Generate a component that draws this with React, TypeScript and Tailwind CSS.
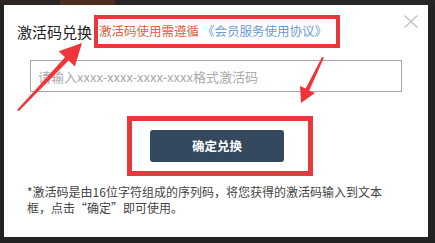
const CJK = { fontFamily: '"Noto Sans CJK SC", "Noto Sans", sans-serif' };

function Arrows() {
  return (
    <svg className="pointer-events-none absolute left-0 top-0" width="435" height="243" viewBox="0 0 435 243">
      <polygon
        fill="#f0353a"
        points="82,43 74.8,66.5 68.6,60.6 19,111 17,110 65,57.2 58.8,51.3"
      />
      <polygon
        fill="#f0353a"
        points="301,103 300,85.9 305.7,88.6 322,57 324,57.5 309.3,90.4 315,93.1"
      />
    </svg>
  );
}

export default function App() {
  return (
    <div className="relative flex h-[243px] w-[435px] flex-col overflow-hidden bg-[#242322]" style={CJK}>
      {/* backdrop strip above the dialog */}
      <div className="flex h-[5px]">
        <div className="w-[60px] bg-[#2b2523]" />
        <div className="w-[55px] bg-[#4e2c1f]" />
        <div className="flex-1 bg-[#262626]" />
      </div>

      <div className="ml-[4px] flex">
        <div className="relative h-[232px] w-[424px] bg-white">
          <div className="flex items-center pl-[13px] pt-[10px]">
            <span className="text-[15px] leading-none text-[#222]">激活码兑换</span>
            <div className="ml-[2px] flex h-[33px] w-[246px] items-center border-[4px] border-[#e8383d] pl-[1px] text-[12.5px] leading-none">
              <span className="text-[#e0603f]">激活码使用需遵循</span>
              <span className="ml-[3px] text-[#6b9bd6]">《会员服务使用协议》</span>
            </div>
          </div>

          <button className="absolute right-[10px] top-[10px] text-[#bbb]" aria-label="close">
            <svg width="14" height="13" viewBox="0 0 14 13">
              <path d="M0.5 0.5 L13.5 12.5 M13.5 0.5 L0.5 12.5" stroke="currentColor" strokeWidth="1.1" />
            </svg>
          </button>

          <input
            className="ml-[26px] mt-[12px] block h-[32px] w-[372px] border border-[#aaa] pl-[7px] text-[13px] text-[#333] outline-none placeholder:text-[#aaa]"
            placeholder="请输入xxxx-xxxx-xxxx-xxxx格式激活码"
          />

          <div className="ml-[123px] mt-[24px] h-[60px] w-[186px] border-[5px] border-[#e8383d] pl-[18px] pt-[9px]">
            <button className="flex h-[32px] w-[134px] items-center justify-center rounded-[3px] bg-[#34495e] text-[12.5px] font-semibold text-white">
              确定兑换
            </button>
          </div>

          <p className="ml-[23px] mt-[8px] text-[12px] leading-[16px] text-[#444]">
            *激活码是由16位字符组成的序列码，将您获得的激活码输入到文本
            <br />
            框，点击“确定”即可使用。
          </p>
        </div>
      </div>

      <Arrows />
    </div>
  );
}
